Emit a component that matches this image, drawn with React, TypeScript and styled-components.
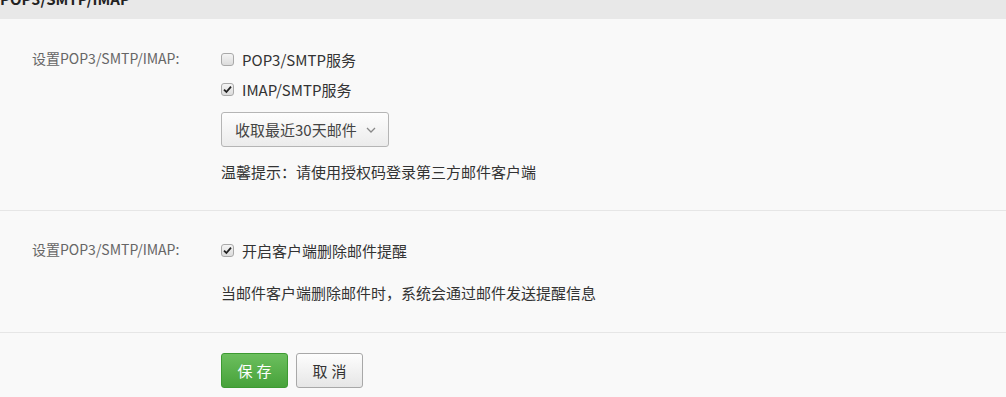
import styled, { createGlobalStyle } from 'styled-components';

const GlobalStyle = createGlobalStyle`
  html, body {
    margin: 0;
    padding: 0;
    background: #f9f9f9;
  }
  body {
    font-family: "Noto Sans CJK SC", "Noto Sans", sans-serif;
    font-size: 15px;
    color: #333;
    overflow: hidden;
  }
`;

const Page = styled.div`
  width: 1006px;
  height: 397px;
  overflow: hidden;
`;

const Header = styled.div`
  margin-top: -21px;
  height: 40px;
  line-height: 40px;
  background: #e8e8e8;
  font-weight: bold;
  font-size: 15px;
  color: #222;
`;

const Section = styled.div<{ $top: number; $bottom: number }>`
  display: flex;
  padding: ${(p) => p.$top}px 0 ${(p) => p.$bottom}px 32px;
  border-bottom: 1px solid #e6e6e6;
`;

const Label = styled.div`
  width: 189px;
  flex-shrink: 0;
  line-height: 28px;
  font-size: 14px;
  color: #666;
`;

const Controls = styled.div`
  display: flex;
  flex-direction: column;
  align-items: flex-start;
`;

const CheckRow = styled.label`
  display: flex;
  align-items: center;
  height: 30px;
  gap: 8px;
  color: #333;
`;

const Box = styled.span`
  width: 13px;
  height: 13px;
  box-sizing: border-box;
  border: 1px solid #a9a9a9;
  border-radius: 3px;
  background: linear-gradient(#f4f4f4, #dcdcdc);
  display: flex;
  align-items: center;
  justify-content: center;
`;

const SelectButton = styled.button`
  margin-top: 8px;
  width: 168px;
  height: 35px;
  box-sizing: border-box;
  border: 1px solid #b5b5b5;
  border-radius: 3px;
  background: linear-gradient(#fdfdfd, #ececec);
  display: flex;
  align-items: center;
  gap: 9px;
  padding: 0 0 0 13px;
  font: inherit;
  font-size: 15px;
  color: #444;
`;

const Note = styled.div<{ $top: number }>`
  margin-top: ${(p) => p.$top}px;
  line-height: 20px;
  color: #333;
`;

const Actions = styled.div`
  display: flex;
  gap: 8px;
  padding: 20px 0 0 221px;
`;

const ActionButton = styled.button<{ $primary?: boolean }>`
  width: 67px;
  height: 35px;
  box-sizing: border-box;
  border-radius: 3px;
  font: inherit;
  font-size: 15px;
  letter-spacing: 4px;
  padding: 0 0 0 4px;
  border: 1px solid ${(p) => (p.$primary ? '#3d9a32' : '#a8a8a8')};
  color: ${(p) => (p.$primary ? '#fff' : '#333')};
  background: ${(p) =>
    p.$primary
      ? 'linear-gradient(#6cbf5e, #47a23a)'
      : 'linear-gradient(#fdfdfd, #e6e6e6)'};
`;

function Check({ checked, children }: { checked?: boolean; children: string }) {
  return (
    <CheckRow>
      <Box>
        {checked ? (
          <svg width="9" height="9" viewBox="0 0 9 9">
            <path d="M1 4.6 L3.4 7 L8 1.6" fill="none" stroke="#222" strokeWidth="1.8" />
          </svg>
        ) : null}
      </Box>
      {children}
    </CheckRow>
  );
}

export default function App() {
  return (
    <Page>
      <GlobalStyle />
      <Header>POP3/SMTP/IMAP</Header>
      <Section $top={25} $bottom={28}>
        <Label>设置POP3/SMTP/IMAP:</Label>
        <Controls>
          <Check>POP3/SMTP服务</Check>
          <Check checked>IMAP/SMTP服务</Check>
          <SelectButton>
            收取最近30天邮件
            <svg width="10" height="6" viewBox="0 0 10 6">
              <path d="M1 1 L5 5 L9 1" fill="none" stroke="#888" strokeWidth="1.3" />
            </svg>
          </SelectButton>
          <Note $top={15}>温馨提示：请使用授权码登录第三方邮件客户端</Note>
        </Controls>
      </Section>
      <Section $top={24} $bottom={29}>
        <Label>设置POP3/SMTP/IMAP:</Label>
        <Controls>
          <Check checked>开启客户端删除邮件提醒</Check>
          <Note $top={18}>当邮件客户端删除邮件时，系统会通过邮件发送提醒信息</Note>
        </Controls>
      </Section>
      <Actions>
        <ActionButton $primary>保存</ActionButton>
        <ActionButton>取消</ActionButton>
      </Actions>
    </Page>
  );
}
